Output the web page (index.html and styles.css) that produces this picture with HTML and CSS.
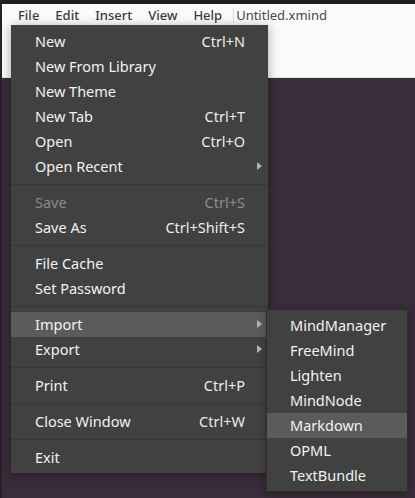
FILE: index.html
```html
<!DOCTYPE html>
<html>
<head>
<meta charset="utf-8">
<link rel="stylesheet" href="styles.css">
</head>
<body>
<div class="screen">
  <div class="topbar"></div>
  <div class="header">
    <div class="menubar">
      <span class="mb-item">File</span>
      <span class="mb-item">Edit</span>
      <span class="mb-item">Insert</span>
      <span class="mb-item">View</span>
      <span class="mb-item">Help</span>
      <span class="mb-sep"></span>
      <span class="title">Untitled.xmind</span>
    </div>
  </div>
  <div class="desk"></div>

  <div class="menu main-menu">
    <div class="row"><span class="label">New</span><span class="key">Ctrl+N</span></div>
    <div class="row"><span class="label">New From Library</span></div>
    <div class="row"><span class="label">New Theme</span></div>
    <div class="row"><span class="label">New Tab</span><span class="key">Ctrl+T</span></div>
    <div class="row"><span class="label">Open</span><span class="key">Ctrl+O</span></div>
    <div class="row"><span class="label">Open Recent</span><span class="arrow"></span></div>
    <div class="sep"></div>
    <div class="row disabled"><span class="label">Save</span><span class="key">Ctrl+S</span></div>
    <div class="row"><span class="label">Save As</span><span class="key">Ctrl+Shift+S</span></div>
    <div class="sep"></div>
    <div class="row"><span class="label">File Cache</span></div>
    <div class="row"><span class="label">Set Password</span></div>
    <div class="sep"></div>
    <div class="row active"><span class="label">Import</span><span class="arrow"></span></div>
    <div class="row"><span class="label">Export</span><span class="arrow"></span></div>
    <div class="sep"></div>
    <div class="row"><span class="label">Print</span><span class="key">Ctrl+P</span></div>
    <div class="sep"></div>
    <div class="row"><span class="label">Close Window</span><span class="key">Ctrl+W</span></div>
    <div class="sep"></div>
    <div class="row"><span class="label">Exit</span></div>
  </div>

  <div class="menu sub-menu">
    <div class="row"><span class="label">MindManager</span></div>
    <div class="row"><span class="label">FreeMind</span></div>
    <div class="row"><span class="label">Lighten</span></div>
    <div class="row"><span class="label">MindNode</span></div>
    <div class="row active"><span class="label">Markdown</span></div>
    <div class="row"><span class="label">OPML</span></div>
    <div class="row"><span class="label">TextBundle</span></div>
  </div>
</div>
</body>
</html>
```
FILE: styles.css
```css
* { box-sizing: border-box; }
html, body { margin: 0; padding: 0; }
body {
  width: 415px;
  height: 498px;
  overflow: hidden;
  background: #3a2c3a;
  font-family: "Noto Sans", "Open Sans", sans-serif;
}
.screen {
  position: relative;
  width: 415px;
  height: 498px;
  display: flex;
  flex-direction: column;
  border-left: 2px solid #2c1f2c;
}
.topbar {
  height: 4px;
  background: #1f1f1f;
  flex: none;
}
.header {
  height: 74px;
  background: #fafafa;
  border-bottom: 1px solid #e4e4e4;
  flex: none;
}
.desk {
  flex: 1;
  background: #3a2c3a;
}
.menubar {
  display: flex;
  align-items: center;
  height: 21px;
  padding-left: 8px;
  font-size: 13px;
  color: #3c3c3c;
}
.mb-item {
  padding: 0 8px;
  font-weight: 500;
}
.mb-sep {
  width: 1px;
  height: 16px;
  background: #dcdcdc;
  margin: 0 2px 0 3px;
}
.title {
  font-weight: 400;
  color: #3f4a57;
}
.menu {
  position: absolute;
  background: #414141;
  color: #f2f2f2;
  font-size: 14.5px;
}
.main-menu {
  left: 9px;
  top: 25px;
  width: 257px;
  padding: 4px 0 3px;
  box-shadow: 0 2px 10px rgba(0,0,0,0.35);
}
.sub-menu {
  left: 264px;
  top: 309px;
  width: 142px;
  padding: 3px 0;
  border: 1px solid #2e2e2e;
  box-shadow: 0 2px 8px rgba(0,0,0,0.3);
}
.row {
  height: 25px;
  display: flex;
  align-items: center;
  padding: 0 23px 2px 24px;
  position: relative;
}
.sub-menu .row { padding-left: 23px; }
.row .label { flex: 1; }
.row .key { color: #ececec; }
.row.disabled { color: #8c8c8c; }
.row.disabled .key { color: #8c8c8c; }
.row.active { background: #5b5b5b; }
.arrow {
  position: absolute;
  right: 6px;
  top: 8px;
  width: 0;
  height: 0;
  border-top: 4px solid transparent;
  border-bottom: 4px solid transparent;
  border-left: 5px solid #b4b4b4;
}
.sep {
  height: 1px;
  background: #363636;
  margin: 5px 0;
}
```
